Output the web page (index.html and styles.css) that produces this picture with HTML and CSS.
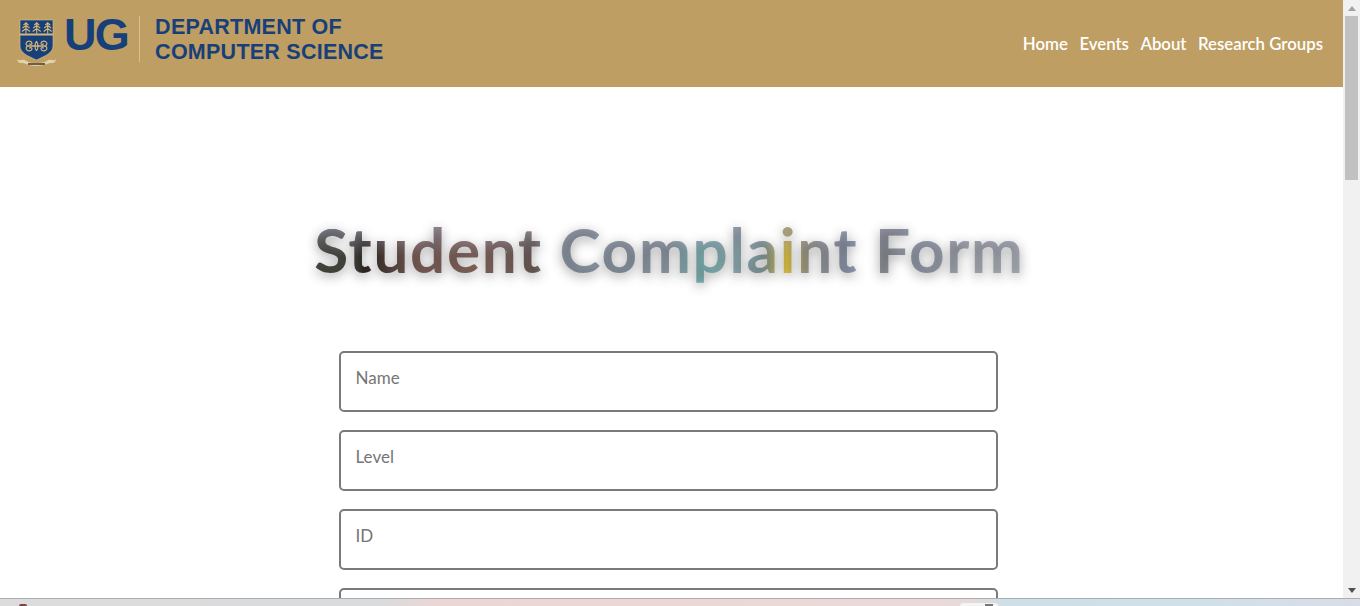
FILE: index.html
```html
<!DOCTYPE html>
<html lang="en">
<head>
<meta charset="utf-8">
<title>Student Complaint Form</title>
<link rel="stylesheet" href="styles.css">
</head>
<body>
<div class="window">
  <div class="viewport">
    <header class="site-header">
      <a class="brand" href="#">
        <svg class="crest" width="42" height="50" viewBox="0 0 42 50" aria-hidden="true">
          <path d="M4 2H37V28C37 35 29 38 20.500 42C12 38 4 35 4 28Z" fill="#173f7a" stroke="#d9c48f" stroke-width=".6"/>
          <rect x="4" y="15.500" width="33" height="2" fill="#d5b777"/>
          <g fill="none" stroke="#d5b777" stroke-width="1.100">
            <path d="M10 4V15.500M7.500 7L10 5L12.500 7M6.500 10L10 7.500L13.500 10M6 13.500L10 10.500L14 13.500"/>
            <path d="M20.700 4V15.500M18.200 7L20.700 5L23.200 7M17.200 10L20.700 7.500L24.200 10M16.700 13.500L20.700 10.500L24.700 13.500"/>
            <path d="M31.700 4V15.500M29.200 7L31.700 5L34.200 7M28.200 10L31.700 7.500L35.200 10M27.700 13.500L31.700 10.500L35.700 13.500"/>
          </g>
          <g fill="none" stroke="#d5b777" stroke-width="1.200">
            <path d="M20.500 28H13C10.500 28 9.500 26 10.500 24.500C11.500 22.500 15.500 22.500 16 25C16.200 26.500 14 27 13.500 25.500"/>
            <path d="M20.500 28H28C30.500 28 31.500 26 30.500 24.500C29.500 22.500 25.500 22.500 25 25C24.800 26.500 27 27 27.500 25.500"/>
            <path d="M20.500 28H13C10.500 28 9.500 30 10.500 31.500C11.500 33.500 15.500 33.500 16 31C16.200 29.500 14 29 13.500 30.500"/>
            <path d="M20.500 28H28C30.500 28 31.500 30 30.500 31.500C29.500 33.500 25.500 33.500 25 31C24.800 29.500 27 29 27.500 30.500"/>
            <path d="M20.500 23.500C18.500 25 18.500 31 20.500 32.500C22.500 31 22.500 25 20.500 23.500Z"/>
          </g>
          <path d="M1 41C4 44 7 40 10 43C16 46 25 46 31 43C34 40 37 44 40 41L39 44C36 46 34 44 31 46C25 48.500 16 48.500 10 46C7 44 5 46 2 44Z" fill="#e0d3ae"/>
          <rect x="12" y="45" width="17" height="2" fill="#6b6148"/>
        </svg>
        <span class="brand-ug">UG</span>
        <span class="brand-rule"></span>
        <span class="brand-dept">DEPARTMENT OF<br>COMPUTER SCIENCE</span>
      </a>
      <nav class="site-nav">
        <a href="#">Home</a>
        <a href="#">Events</a>
        <a href="#">About</a>
        <a href="#">Research Groups</a>
      </nav>
    </header>
    <main class="content">
      <h1 class="title">Student Complaint Form</h1>
      <form class="complaint-form">
        <input class="field" type="text" placeholder="Name">
        <input class="field" type="text" placeholder="Level">
        <input class="field" type="text" placeholder="ID">
        <input class="field" type="text" placeholder="Email">
      </form>
    </main>
  </div>
  <div class="scrollbar" aria-hidden="true">
    <span class="arrow arrow-up"></span>
    <span class="thumb"></span>
    <span class="arrow arrow-down"></span>
  </div>
</div>
<footer class="taskbar">
  <span class="taskbar-dot"></span>
  <span class="taskbar-tab"></span>
</footer>
</body>
</html>
```
FILE: styles.css
```css
* { box-sizing: border-box; }
html, body { margin: 0; height: 100%; overflow: hidden; }
body {
  display: flex;
  flex-direction: column;
  background: #fff;
  font-family: "Lato", "Liberation Sans", sans-serif;
}
.window { flex: 1; min-height: 0; display: flex; }
.viewport { flex: 1; min-width: 0; overflow: hidden; }

.site-header {
  height: 87px;
  background: #be9e62;
  display: flex;
  align-items: center;
  justify-content: space-between;
  padding: 0 20px 0 16px;
}
.brand {
  display: flex;
  align-items: center;
  margin-bottom: 8px;
  text-decoration: none;
  color: #173f7a;
  font-family: "Liberation Sans", Arial, sans-serif;
  font-weight: 700;
}
.crest { margin-top: 6px; }
.brand-ug { font-size: 45px; line-height: 1; margin: 0 0 10px 6px; letter-spacing: -1.700px; }
.brand-rule { width: 1px; height: 46px; background: #d6c193; margin: 0 15px 1px 11px; }
.brand-dept { font-size: 21.500px; line-height: 24.500px; letter-spacing: .25px; }
.site-nav { display: flex; gap: 11.500px; }
.site-nav a { color: #fff; text-decoration: none; font-size: 16.800px; font-weight: 600; }

.content { display: flex; flex-direction: column; align-items: center; padding: 123px 6px 0 0; }
.title {
  margin: 0 0 63px 2px;
  font-size: 62px;
  letter-spacing: 1.700px;
  line-height: 78px;
  font-weight: 700;
  color: transparent;
  background-image:
    radial-gradient(circle 1.500px at 192px 42px, #6fc26f 99%, transparent),
    linear-gradient(180deg, rgba(150,150,170,.7) 0 25%, rgba(40,40,30,0) 60%),
    linear-gradient(90deg, #44463c 0 5.500%, #2a211c 7%, #4c3a34 10%, #7f5d56 14%, #8a665d 22%, #7d625c 27%, #6c5a55 31%, #909daa 34%, #8e9ba8 44%, #92a0ac 50%, #80c0c0 55%, #93b5bd 59%, #84a0a5 63%, #f0d040 66.500%, #a6a084 69%, #8f97ab 73%, #90a0b5 76%, #92979d 80%, #979eb0 85%, #abb0b8 92%, #b4bac4 100%);
  -webkit-background-clip: text;
  background-clip: text;
  text-shadow: 0 3px 12px rgba(50, 50, 50, .45);
  filter: blur(.5px);
}
.complaint-form { display: flex; flex-direction: column; gap: 18px; width: 659px; }
.field {
  flex: none;
  height: 61px;
  padding: 0 14.500px 8px;
  border: 2px solid #7a7a7a;
  border-radius: 5px;
  background: #fff;
  font: 400 17px "Lato", sans-serif;
  outline: none;
}
.field::placeholder { color: #757575; opacity: 1; }

.scrollbar {
  width: 17px;
  background: #f1f1f1;
  display: flex;
  flex-direction: column;
  align-items: center;
  padding: 5px 2px;
}
.thumb { width: 13px; height: 164px; margin-top: 5px; background: #c1c1c1; flex: none; }
.arrow { width: 0; height: 0; border-left: 4px solid transparent; border-right: 4px solid transparent; flex: none; }
.arrow-up { border-bottom: 5px solid #a3a3a3; margin-top: 1px; }
.arrow-down { border-top: 5px solid #505050; margin-top: auto; }

.taskbar {
  flex: none;
  height: 8px;
  position: relative;
  border-top: 1px solid #aeaeae;
  background: linear-gradient(90deg, #dcdcdc 0, #dadbdd 28%, #ebd6d4 32%, #ecd8d8 68%, #e7dad8 71%, #cfdfe8 74%, #cfe0ea 88%, #d8dde8 100%);
}
.taskbar-dot { position: absolute; left: 19px; top: 5px; width: 8px; height: 2px; border-radius: 4px 4px 0 0; background: #7a4545; }
.taskbar-tab { position: absolute; left: 960px; top: 4px; width: 38px; height: 3px; border-radius: 3px 3px 0 0; background: linear-gradient(#777, #777) 25px 1px / 8px 2px no-repeat, #f4f4f4; }
```
